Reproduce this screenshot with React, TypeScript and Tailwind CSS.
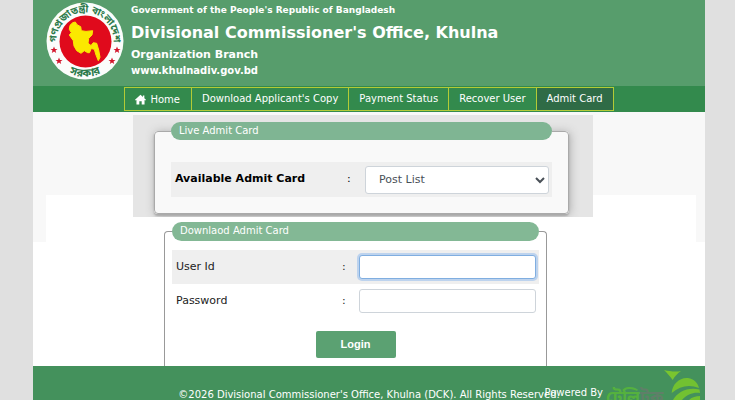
import { useState } from "react";

interface NavItem {
  label: string;
  active?: boolean;
}

const navItems: NavItem[] = [
  { label: "Download Applicant's Copy" },
  { label: "Payment Status" },
  { label: "Recover User" },
  { label: "Admit Card", active: true },
];

const GovSeal = () => (
  <svg viewBox="0 0 78 78" className="h-[78px] w-[78px] shrink-0" role="img" aria-label="Government seal">
    <defs>
      <path id="seal-top" d="M 12 48 A 28.5 28.5 0 1 1 66 48" />
      <path id="seal-bottom" d="M 8 57 A 36 36 0 0 0 70 57" />
    </defs>
    <circle cx="39" cy="39" r="38.5" fill="#fbfdfb" />
    <circle cx="39.5" cy="39.5" r="26" fill="#e00a1c" />
    <path
      d="M26.7 20.7 L29.3 20 31 22.7 34.7 24.7 35.3 28.7 40 29.4 46.7 28.7 46 33 42.7 36.3 42 41.3 45 43.5 47.3 40.7 50.7 41.3 52.7 48 54 55.3 52.3 58.7 50 53 48.3 47.3 45.3 46.5 43.5 50.7 41.7 50.7 38.3 48.7 35 51.3 30.7 48.7 28 44 27.3 38.7 23.3 33 25.3 30.7 23.3 27.3 24 23.3 Z"
      fill="#fbe800"
      stroke="#fbe800"
      strokeWidth="1"
    />
    <g fill="#2c7a4b" fontFamily="'Noto Sans Bengali', 'Noto Sans', sans-serif">
      <text textAnchor="middle" fontSize="10" fontWeight="700">
        <textPath href="#seal-top" startOffset="50%">গণপ্রজাতন্ত্রী বাংলাদেশ</textPath>
      </text>
      <text textAnchor="middle" fontSize="11" fontWeight="700">
        <textPath href="#seal-bottom" startOffset="50%">সরকার</textPath>
      </text>
    </g>
    <g fill="#d3152b">
      {[
        [8, 48],
        [13, 59],
        [71, 48],
        [66, 59],
      ].map(([x, y]) => (
        <path
          key={`${x}-${y}`}
          transform={`translate(${x} ${y})`}
          d="M0 -3.6 L1 -1.1 3.5 -1 1.5 0.6 2.2 3 0 1.6 -2.2 3 -1.5 0.6 -3.5 -1 -1 -1.1 Z"
        />
      ))}
    </g>
  </svg>
);

const HomeIcon = () => (
  <svg viewBox="0 0 12 12" className="h-[11px] w-[11px]" fill="currentColor" aria-hidden="true">
    <path d="M6 0.8 L8.6 3.2 V1.6 H10.2 V4.7 L12 6.4 11.2 7.2 10.4 6.6 V11.4 H7.3 V8 H4.7 V11.4 H1.6 V6.6 L0.8 7.2 0 6.4 Z" />
  </svg>
);

const TeletalkLogo = () => (
  <svg viewBox="0 0 100 34" className="h-[34px] w-[100px]" role="img" aria-label="Teletalk">
    <text
      x="1"
      y="37"
      fontFamily="'Noto Sans Bengali', 'Noto Sans', sans-serif"
      fontSize="17"
      fontWeight="700"
      fill="#55b13e"
    >
      টেলি
      <tspan x="35" fill="#5f7f69">
        টক
      </tspan>
    </text>
    <path d="M59 4 C65 5.5 71 6 76 5 C72 8 70 10 67.7 14 C65 10 62 7 59 4 Z" fill="#7ac52f" />
    <path d="M66.7 27 C67 18 75 11 83 12 C89 13 93 17 94 22 C84 18 75 20 66.7 27 Z" fill="#72c131" />
    <path d="M68 34 C73 26 82 21 94.5 23.5 L95 27 C89 26 82 28 77 34 Z" fill="#72c131" />
    <path d="M84 34 C87 31 91 30 95 30 L95 34 Z" fill="#72c131" />
  </svg>
);

const App = () => {
  const [userId, setUserId] = useState("");
  const [password, setPassword] = useState("");

  return (
    <div className="min-h-screen bg-[#e0e0e0] pr-[30px] pl-[33px] font-['Verdana','DejaVu_Sans',sans-serif]">
      <div className="flex min-h-screen flex-col bg-white">
        <header className="flex h-[86px] gap-[7px] bg-[#579d6c] pt-[2px] pl-[13px] font-bold text-white">
          <GovSeal />
          <div>
            <p className="text-[9px] leading-[17px]">Government of the People's Republic of Bangladesh</p>
            <h1 className="text-[16px] leading-[28px]">Divisional Commissioner's Office, Khulna</h1>
            <p className="text-[11px] leading-[16px]">Organization Branch</p>
            <p className="text-[10px] leading-[16px]">www.khulnadiv.gov.bd</p>
          </div>
        </header>

        <nav className="flex h-[26px] justify-center bg-[#338a4d] py-px text-[10px] text-white">
          <a href="#home" className="flex items-center gap-1 border border-[#b3cb36] pr-[11px] pl-[10px]">
            <HomeIcon />
            Home
          </a>
          {navItems.map((item) => (
            <a
              key={item.label}
              href="#"
              className={`flex items-center border border-l-0 border-[#b3cb36] px-[10px] pb-[2px] ${item.active ? "bg-[#2f6b46]" : ""}`}
            >
              {item.label}
            </a>
          ))}
        </nav>

        <main className="relative isolate pt-[3px]">
          <div className="absolute inset-x-0 top-0 -z-10 h-[130px] bg-[#f8f8f8] pt-[83px] pr-[9px] pl-[13px]">
            <div className="h-full bg-white" />
          </div>

          <section className="mr-[112px] ml-[100px] h-[102px] overflow-hidden bg-[#e5e5e5] pt-[7px] pr-[24px] pl-[21px]">
            <fieldset className="rounded-[4px] border border-[#aaa] bg-[#f9f9f9] px-4 pb-4 shadow-[0_2px_2px_#aaa,1px_1px_10px_#aaa]">
              <legend className="h-[18px] w-full rounded-full bg-[#7fb593] px-2 text-[10px] leading-[18px] text-white">
                Live Admit Card
              </legend>
              <div className="mt-[22px] flex h-[35px] items-center bg-[#efefef] pr-[3px] pl-1 text-[11px]">
                <label htmlFor="post" className="flex-1 font-bold text-black">
                  Available Admit Card
                </label>
                <span className="w-[18px]">:</span>
                <select
                  id="post"
                  className="h-[28px] w-[184px] rounded-[3px] border border-[#ced4da] bg-white px-[9px] text-[11px] text-[#495057]"
                >
                  <option>Post List</option>
                </select>
              </div>
            </fieldset>
          </section>

          <form className="mr-[158px] ml-[131px] pt-[5px]" onSubmit={(e) => e.preventDefault()}>
            <fieldset className="rounded-t-[4px] border border-b-0 border-[#999] px-[7px] pb-2 text-[11px] text-[#222]">
              <legend className="h-[19px] w-full rounded-full bg-[#83b895] px-2 text-[10px] leading-[18px] text-white">
                Downlaod Admit Card
              </legend>
              <div className="mt-[9px] flex h-[34px] items-center bg-[#efefef] pr-[3px] pl-1">
                <label htmlFor="user-id" className="flex-1">
                  User Id
                </label>
                <span className="w-[17px]">:</span>
                <input
                  id="user-id"
                  type="text"
                  autoFocus
                  value={userId}
                  onChange={(e) => setUserId(e.target.value)}
                  className="h-[24px] w-[177px] rounded-[3px] border border-[#80aee0] bg-white px-2 text-[11px] shadow-[0_0_0_2px_#bdd3ee] outline-none"
                />
              </div>
              <div className="flex h-[34px] items-center pr-[3px] pl-1">
                <label htmlFor="password" className="flex-1">
                  Password
                </label>
                <span className="w-[17px]">:</span>
                <input
                  id="password"
                  type="password"
                  value={password}
                  onChange={(e) => setPassword(e.target.value)}
                  className="h-[24px] w-[177px] rounded-[3px] border border-[#ced4da] bg-white px-2 text-[11px] outline-none"
                />
              </div>
              <div className="flex justify-center pt-[13px]">
                <button
                  type="submit"
                  className="h-[27px] w-[80px] rounded-[2px] bg-[#5ba172] font-['Liberation_Sans',sans-serif] text-[11px] font-bold text-white"
                >
                  Login
                </button>
              </div>
            </fieldset>
          </form>
        </main>

        <footer className="relative h-[34px] grow overflow-hidden bg-[#44915c] pt-[21px] text-[10px] leading-[16px] text-white">
          <p className="text-center">©2026 Divisional Commissioner's Office, Khulna (DCK). All Rights Reserved.</p>
          <div className="absolute top-0 right-0 flex gap-[2px]">
            <span className="pt-[19px]">Powered By</span>
            <TeletalkLogo />
          </div>
        </footer>
      </div>
    </div>
  );
};

export default App;
